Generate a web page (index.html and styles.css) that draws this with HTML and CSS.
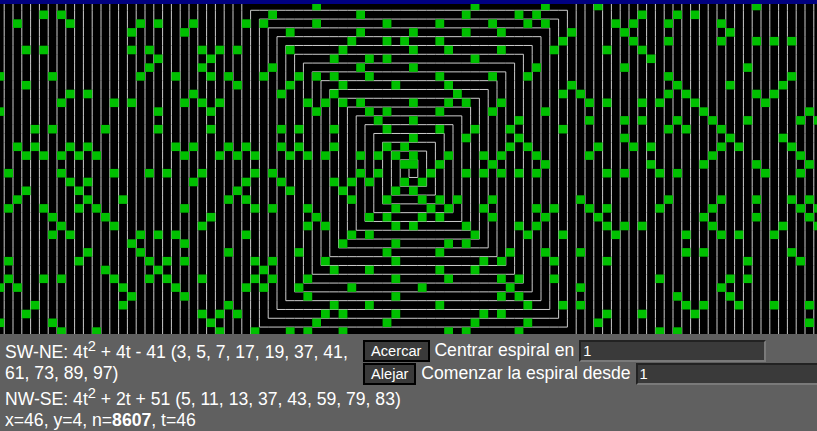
FILE: index.html
```html
<!DOCTYPE html>
<html lang="es">
<head>
<meta charset="utf-8">
<title>Espiral de Ulam</title>
<link rel="stylesheet" href="styles.css">
</head>
<body>
<div class="topbar"></div>
<canvas id="spiral" class="spiral" width="817" height="330"></canvas>
<div class="panel">
  <div class="top">
    <div class="sw">SW-NE: 4t<sup>2</sup> + 4t - 41 (3, 5, 7, 17, 19, 37, 41, 61, 73, 89, 97)</div>
    <div class="controls">
      <div class="row"><button class="btn">Acercar</button> Centrar espiral en <input class="field" value="1"></div>
      <div class="row"><button class="btn">Alejar</button> Comenzar la espiral desde <input class="field" value="1"></div>
    </div>
  </div>
  <div class="line">NW-SE: 4t<sup>2</sup> + 2t + 51 (5, 11, 13, 37, 43, 59, 79, 83)</div>
  <div class="line">x=46, y=4, n=<b>8607</b>, t=46</div>
</div>
<script src="script.js"></script>
</body>
</html>
```
FILE: styles.css
```css
html, body {
  margin: 0;
  padding: 0;
  width: 817px;
  height: 431px;
  overflow: hidden;
  background: #606060;
  color: #fff;
  font-family: "Liberation Sans", Arial, sans-serif;
  font-size: 17.6px;
}
.topbar {
  height: 4px;
  background: #000080;
}
.spiral {
  display: block;
  width: 817px;
  height: 330px;
  background: #000;
}
.panel {
  width: 817px;
  height: 97px;
  overflow: hidden;
  box-sizing: border-box;
  padding-top: 4px;
}
.top {
  display: flex;
  align-items: flex-start;
}
.sw {
  flex: 0 0 358px;
  box-sizing: border-box;
  padding-left: 5px;
}
.line {
  padding-left: 5px;
}
.controls {
  flex: 0 0 auto;
  padding: 2px 0 0 5px;
  white-space: nowrap;
}
.row {
  height: 22.5px;
}
.btn {
  padding: 1px 6px;
  font: 14.67px "Liberation Sans", Arial, sans-serif;
  color: #fff;
  background: #3a3a3a;
  border: 2px solid #000;
}
.field {
  box-sizing: border-box;
  width: 187px;
  padding: 1px 2px;
  font: 14.67px "Liberation Sans", Arial, sans-serif;
  color: #fff;
  background: #3a3a3a;
  border: 2px solid;
  border-color: #222 #7a7a7a #7a7a7a #222;
}
```
FILE: script.js
```js
(function () {
  var canvas = document.getElementById('spiral');
  var ctx = canvas.getContext('2d');
  var s = 8.8, cx = 409, cy = 164.67;
  var N = 60000;

  function isPrime(n) {
    if (n < 2) return false;
    for (var d = 2; d * d <= n; d++) if (n % d === 0) return false;
    return true;
  }

  ctx.fillStyle = '#000';
  ctx.fillRect(0, 0, canvas.width, canvas.height);

  var dirs = [[0, 1], [1, 0], [0, -1], [-1, 0]];
  var x = 0, y = 0, n = 1, len = 1, d = 0, i, j;
  var points = [[0, 0, 1]];
  while (n < N) {
    for (i = 0; i < 2; i++) {
      for (j = 0; j < len; j++) {
        x += dirs[d][0];
        y += dirs[d][1];
        n++;
        points.push([x, y, n]);
      }
      d = (d + 1) % 4;
    }
    len++;
  }

  ctx.strokeStyle = '#ccc';
  ctx.lineWidth = 1;
  ctx.beginPath();
  ctx.moveTo(cx, cy);
  points.forEach(function (p) {
    ctx.lineTo(cx + p[0] * s, cy + p[1] * s);
  });
  ctx.stroke();

  ctx.fillStyle = '#00c000';
  points.forEach(function (p) {
    if (isPrime(p[2])) {
      ctx.fillRect(cx - p[0] * s, cy - p[1] * s + 0.25, s, s - 0.25);
    }
  });
})();
```
